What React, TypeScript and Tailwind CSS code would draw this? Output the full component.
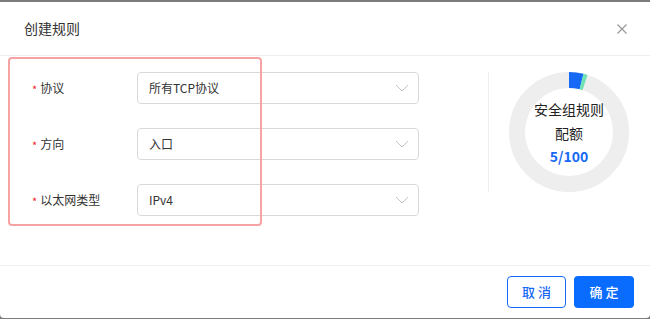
import React from 'react'

const font = { fontFamily: '"Noto Sans CJK SC", "Noto Sans", sans-serif' }

const Chevron = () => (
  <svg width="14" height="8" viewBox="0 0 14 8" fill="none">
    <path d="M1 1l6 6 6-6" stroke="#c4c4c4" strokeWidth="1" />
  </svg>
)

const Field = ({ label, value }: { label: string; value: string }) => (
  <div className="flex items-center h-[32px]">
    <div className="w-[105px] flex items-center text-[12px] text-[#333]">
      <span className="text-[#f5222d] mr-[3px] text-[11px] pt-[2px]">*</span>
      {label}
    </div>
    <div className="flex-1 h-[32px] border border-[#d9d9d9] rounded-[4px] flex items-center justify-between pl-[11px] pr-[9px] text-[12px] text-[#333]">
      <span>{value}</span>
      <Chevron />
    </div>
  </div>
)

const Quota = () => {
  const c = 2 * Math.PI * 52
  return (
    <div className="relative w-[120px] h-[120px]">
      <svg width="120" height="120" viewBox="0 0 120 120" className="-rotate-90">
        <circle cx="60" cy="60" r="52" fill="none" stroke="#eeeeee" strokeWidth="16" />
        <circle cx="60" cy="60" r="52" fill="none" stroke="#1669f5" strokeWidth="16"
          strokeDasharray={`${c * 0.039} ${c}`} />
        <circle cx="60" cy="60" r="52" fill="none" stroke="#6fe3b4" strokeWidth="16"
          strokeDasharray={`${c * 0.011} ${c}`} strokeDashoffset={-c * 0.039} />
      </svg>
      <div className="absolute inset-0 flex flex-col items-center justify-center">
        <div className="text-[14px] leading-[24px] text-[#222]">安全组规则</div>
        <div className="text-[14px] leading-[24px] text-[#222]">配额</div>
        <div className="text-[14px] leading-[22px] font-bold text-[#1669f5]">5/100</div>
      </div>
    </div>
  )
}

export default function App() {
  return (
    <div className="w-[650px] h-[319px] bg-[#7c7c7c] pt-[2px] pb-[1px]" style={font}>
      <div className="relative h-full bg-white rounded-b-[4px] flex flex-col">
        <div className="h-[54px] flex items-center justify-between pl-[24px] pr-[23px] border-b border-[#eeeeee]">
          <span className="text-[14px] text-[#333]">创建规则</span>
          <svg width="10" height="10" viewBox="0 0 10 10">
            <path d="M0.5 0.5l9 9M9.5 0.5l-9 9" stroke="#999" strokeWidth="1.2" />
          </svg>
        </div>

        <div className="flex-1 flex items-start pl-[32px] pt-[16px]">
          <div className="w-[387px] flex flex-col gap-[24px]">
            <Field label="协议" value="所有TCP协议" />
            <Field label="方向" value="入口" />
            <Field label="以太网类型" value="IPv4" />
          </div>
          <div className="ml-[69px] w-px h-[120px] bg-[#eeeeee]" />
          <div className="ml-[20px]">
            <Quota />
          </div>
        </div>

        <div className="h-[53px] border-t border-[#eeeeee] flex items-center justify-end gap-[8px] pr-[16px]">
          <button className="w-[59px] h-[32px] rounded-[4px] border border-[#1669f5] text-[#1669f5] text-[13px] font-medium">取 消</button>
          <button className="w-[60px] h-[32px] rounded-[4px] bg-[#0a6cff] text-white text-[13px] font-medium">确 定</button>
        </div>

        <div className="absolute left-[8px] top-[55px] w-[254px] h-[169px] border-2 border-[#f7a3a3] rounded-[4px] pointer-events-none" />
      </div>
    </div>
  )
}
